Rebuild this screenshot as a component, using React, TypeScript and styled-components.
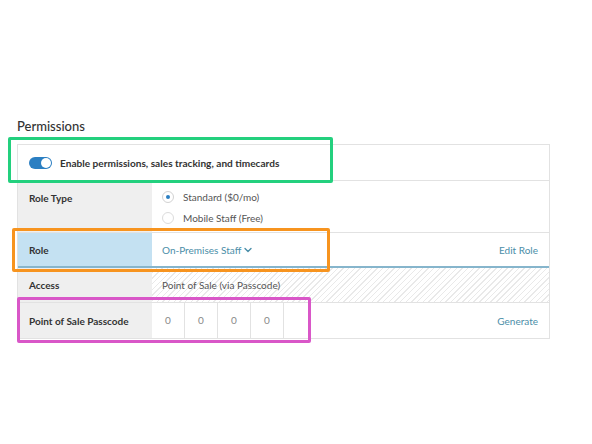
import React from "react";
import styled, { createGlobalStyle } from "styled-components";

const GlobalStyle = createGlobalStyle`
  html, body {
    margin: 0;
    padding: 0;
    background: #ffffff;
  }
  body {
    font-family: "Lato", "Noto Sans", sans-serif;
    color: #3a3a3a;
  }
`;

const Page = styled.div`
  position: relative;
  width: 592px;
  height: 444px;
  padding: 118px 42px 0 17px;
  box-sizing: border-box;
`;

const Title = styled.h2`
  margin: 0 0 10px 0;
  font-size: 13px;
  line-height: 16px;
  font-weight: 500;
  color: #333;
`;

const Table = styled.div`
  border: 1px solid #e2e2e2;
  width: 533px;
  box-sizing: border-box;
`;

const ToggleRow = styled.div`
  display: flex;
  align-items: center;
  gap: 8px;
  height: 35px;
  padding-left: 11px;
  border-bottom: 1px solid #e2e2e2;
  font-size: 10.1px;
  font-weight: 700;
  color: #333;
`;

const Switch = styled.span`
  position: relative;
  width: 23px;
  height: 12px;
  border-radius: 6px;
  background: #2b7fc2;
  &::after {
    content: "";
    position: absolute;
    right: 1px;
    top: 1px;
    width: 10px;
    height: 10px;
    border-radius: 50%;
    background: #fff;
  }
`;

const Row = styled.div<{ $h: number; $accent?: boolean }>`
  display: grid;
  grid-template-columns: 134px 1fr;
  height: ${(p) => p.$h}px;
  border-bottom: ${(p) => (p.$accent ? "2px solid #86b5cc" : "1px solid #e2e2e2")};
  box-sizing: border-box;
  &:last-child {
    border-bottom: none;
  }
`;

const Label = styled.div<{ $active?: boolean; $top?: boolean }>`
  background: ${(p) => (p.$active ? "#c4e1f2" : "#efefef")};
  padding: ${(p) => (p.$top ? "11px 0 0 11px" : "0 0 0 11px")};
  display: flex;
  align-items: ${(p) => (p.$top ? "flex-start" : "center")};
  font-size: 10px;
  font-weight: 700;
  color: #333;
`;

const Cell = styled.div<{ $hatched?: boolean }>`
  display: flex;
  align-items: center;
  justify-content: space-between;
  padding: 0 11px 0 10px;
  font-size: 10px;
  color: #555;
  background: ${(p) =>
    p.$hatched
      ? "repeating-linear-gradient(135deg, #ffffff 0 3px, #e9e9e9 3px 4px)"
      : "#ffffff"};
`;

const Radios = styled.div`
  display: flex;
  flex-direction: column;
  gap: 9px;
  padding: 10px 0 0 10px;
`;

const RadioLine = styled.label`
  display: flex;
  align-items: center;
  gap: 9px;
  font-size: 10px;
  color: #555;
  height: 12px;
`;

const Radio = styled.span<{ $on?: boolean }>`
  position: relative;
  width: 10px;
  height: 10px;
  border-radius: 50%;
  border: 1px solid ${(p) => (p.$on ? "#d2d2d2" : "#dcdcdc")};
  background: #fff;
  &::after {
    content: "";
    display: ${(p) => (p.$on ? "block" : "none")};
    position: absolute;
    left: 3px;
    top: 3px;
    width: 4px;
    height: 4px;
    border-radius: 50%;
    background: #2b7fc2;
  }
`;

const Link = styled.span`
  display: inline-flex;
  align-items: center;
  gap: 3px;
  color: #4b8ea8;
  font-size: 10px;
`;

const DigitCells = styled.div`
  display: flex;
  height: 100%;
`;

const Digit = styled.span`
  width: 33px;
  display: flex;
  align-items: center;
  justify-content: center;
  padding-bottom: 2px;
  border-right: 1px solid #e2e2e2;
  box-sizing: border-box;
  font-size: 10px;
  color: #888;
`;

const CodeCell = styled(Cell)`
  padding-left: 0;
  align-items: stretch;
  & > ${Link} {
    align-self: center;
  }
`;

const Marker = styled.div<{ $c: string; $x: number; $y: number; $w: number; $h: number }>`
  position: absolute;
  left: ${(p) => p.$x}px;
  top: ${(p) => p.$y}px;
  width: ${(p) => p.$w}px;
  height: ${(p) => p.$h}px;
  border: 3px solid ${(p) => p.$c};
  border-radius: 2px;
  box-sizing: border-box;
  pointer-events: none;
`;

const Chevron = () => (
  <svg width="8" height="6" viewBox="0 0 8 6" fill="none">
    <path d="M1 1.5 L4 4.5 L7 1.5" stroke="#4b8ea8" strokeWidth="1.4" strokeLinecap="round" strokeLinejoin="round" />
  </svg>
);

export default function App() {
  return (
    <>
      <GlobalStyle />
      <Page>
        <Title>Permissions</Title>
        <Table>
          <ToggleRow>
            <Switch />
            Enable permissions, sales tracking, and timecards
          </ToggleRow>
          <Row $h={52}>
            <Label $top>Role Type</Label>
            <Radios>
              <RadioLine>
                <Radio $on />
                Standard ($0/mo)
              </RadioLine>
              <RadioLine>
                <Radio />
                Mobile Staff (Free)
              </RadioLine>
            </Radios>
          </Row>
          <Row $h={35} $accent>
            <Label $active>Role</Label>
            <Cell>
              <Link>
                On-Premises Staff <Chevron />
              </Link>
              <Link>Edit Role</Link>
            </Cell>
          </Row>
          <Row $h={35}>
            <Label>Access</Label>
            <Cell $hatched>Point of Sale (via Passcode)</Cell>
          </Row>
          <Row $h={35}>
            <Label>Point of Sale Passcode</Label>
            <CodeCell>
              <DigitCells>
                {["0", "0", "0", "0"].map((d, i) => (
                  <Digit key={i}>{d}</Digit>
                ))}
              </DigitCells>
              <Link>Generate</Link>
            </CodeCell>
          </Row>
        </Table>
        <Marker $c="#23d07e" $x={8} $y={137} $w={325} $h={46} />
        <Marker $c="#f7941f" $x={12} $y={228} $w={318} $h={44} />
        <Marker $c="#d957c8" $x={17} $y={297} $w={294} $h={46} />
      </Page>
    </>
  );
}
